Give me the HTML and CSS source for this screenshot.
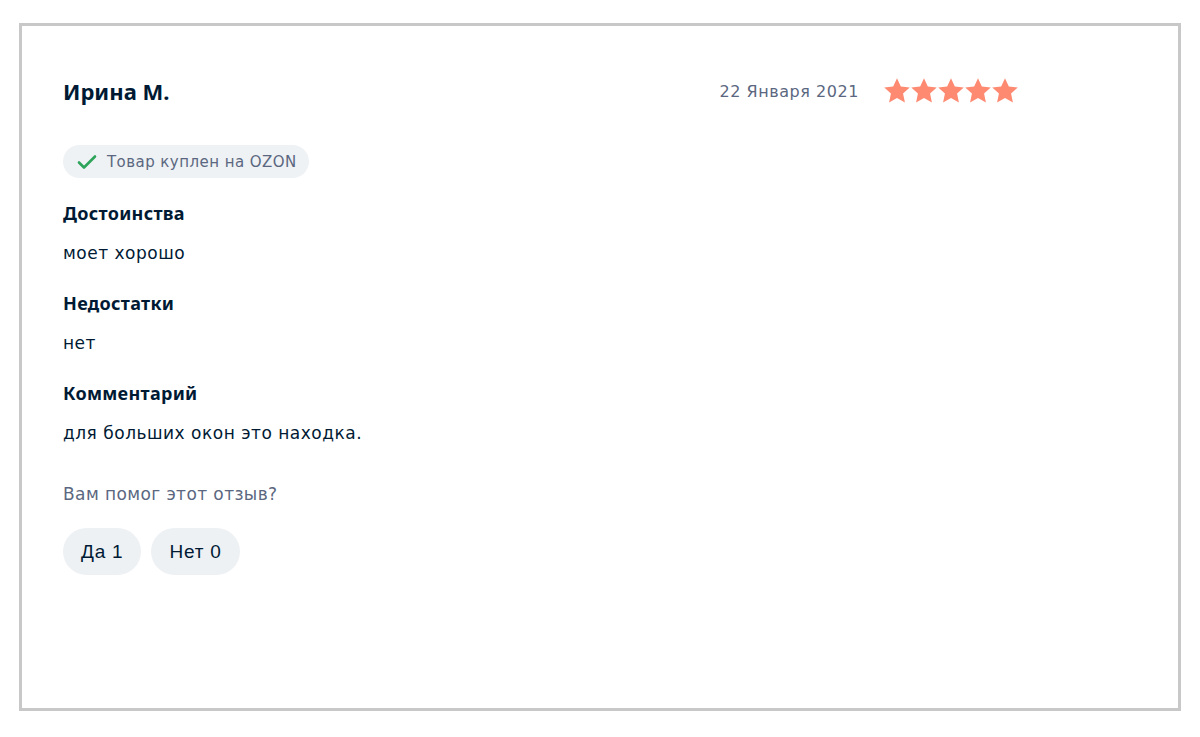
FILE: index.html
```html
<!DOCTYPE html>
<html lang="ru">
<head>
    <meta charset="UTF-8">
    <meta name="viewport" content="width=device-width, initial-scale=1.0">
    <title>Отзыв</title>
    <link rel="stylesheet" href="styles.css">
</head>
<body>
    <div class="review">
        <!-- Header: author, date, rating -->
        <div class="review-header">
            <div class="author">Ирина М.</div>
            <div class="meta">
                <span class="date">22 Января 2021</span>
                <div class="stars">
                    <svg viewBox="1.5 1.5 21 21"><path d="M12 1.8l3.1 6.6 7.2.8-5.4 4.9 1.5 7.1L12 17.6l-6.4 3.6 1.5-7.1L1.7 9.2l7.2-.8z"/></svg>
                    <svg viewBox="1.5 1.5 21 21"><path d="M12 1.8l3.1 6.6 7.2.8-5.4 4.9 1.5 7.1L12 17.6l-6.4 3.6 1.5-7.1L1.7 9.2l7.2-.8z"/></svg>
                    <svg viewBox="1.5 1.5 21 21"><path d="M12 1.8l3.1 6.6 7.2.8-5.4 4.9 1.5 7.1L12 17.6l-6.4 3.6 1.5-7.1L1.7 9.2l7.2-.8z"/></svg>
                    <svg viewBox="1.5 1.5 21 21"><path d="M12 1.8l3.1 6.6 7.2.8-5.4 4.9 1.5 7.1L12 17.6l-6.4 3.6 1.5-7.1L1.7 9.2l7.2-.8z"/></svg>
                    <svg viewBox="1.5 1.5 21 21"><path d="M12 1.8l3.1 6.6 7.2.8-5.4 4.9 1.5 7.1L12 17.6l-6.4 3.6 1.5-7.1L1.7 9.2l7.2-.8z"/></svg>
                </div>
            </div>
        </div>

        <div class="badge">
            <svg class="check" viewBox="0 0 20 16"><path d="M2 8.5l5 5L18 2.5" fill="none" stroke="#2ea35a" stroke-width="2.6" stroke-linecap="round" stroke-linejoin="round"/></svg>
            <span>Товар куплен на OZON</span>
        </div>

        <!-- Review body -->
        <div class="section">
            <div class="section-title">Достоинства</div>
            <div class="section-text">моет хорошо</div>
        </div>
        <div class="section">
            <div class="section-title">Недостатки</div>
            <div class="section-text">нет</div>
        </div>
        <div class="section">
            <div class="section-title">Комментарий</div>
            <div class="section-text">для больших окон это находка.</div>
        </div>

        <div class="helpful">Вам помог этот отзыв?</div>
        <div class="vote">
            <button class="vote-btn">Да 1</button>
            <button class="vote-btn">Нет 0</button>
        </div>
    </div>
</body>
</html>
```

FILE: styles.css
```css
body {
    margin: 0;
    padding: 23px 0 0 19px;
    background-color: #fff;
    font-family: "DejaVu Sans", "Noto Sans", sans-serif;
    color: #001a34;
}
.review {
    width: 1162px;
    height: 688px;
    box-sizing: border-box;
    border: 3px solid #c8c8c8;
    padding: 51px 41px 0;
}
.review-header {
    display: flex;
    justify-content: space-between;
    align-items: center;
    width: 955px;
    height: 28px;
}
.author {
    font-family: "Noto Sans", sans-serif;
    font-size: 22px;
    font-weight: 700;
    line-height: 28px;
}
.meta {
    display: flex;
    align-items: center;
}
.date {
    font-size: 16px;
    letter-spacing: 0.55px;
    color: #5b6780;
    margin-right: 25px;
}
.stars {
    display: flex;
    gap: 1px;
}
.stars svg {
    width: 26px;
    height: 26px;
    fill: #fe8a72;
}
.badge {
    display: inline-flex;
    align-items: center;
    margin-top: 40px;
    height: 33px;
    padding: 0 12px 0 14px;
    border-radius: 17px;
    background-color: #eef2f5;
    font-size: 15px;
    letter-spacing: 0.45px;
    color: #5b6780;
}
.check {
    width: 20px;
    height: 16px;
    margin-right: 10px;
}
.section {
    margin-top: 26px;
}
.badge + .section {
    margin-top: 23px;
}
.section-title {
    font-family: "Noto Sans", sans-serif;
    font-size: 18px;
    font-weight: 700;
    line-height: 24px;
    letter-spacing: 0.3px;
}
.section-text {
    margin-top: 16px;
    font-size: 17px;
    line-height: 24px;
    letter-spacing: 0.5px;
}
.helpful {
    margin-top: 37px;
    font-size: 17px;
    line-height: 24px;
    letter-spacing: 0.4px;
    color: #5b6780;
}
.vote {
    display: flex;
    gap: 10px;
    margin-top: 22px;
}
.vote-btn {
    height: 47px;
    padding: 0 18px;
    border: none;
    border-radius: 24px;
    background-color: #eef1f4;
    font-family: "Liberation Sans", sans-serif;
    font-size: 19px;
    letter-spacing: 0.8px;
    color: #001a34;
}
```
